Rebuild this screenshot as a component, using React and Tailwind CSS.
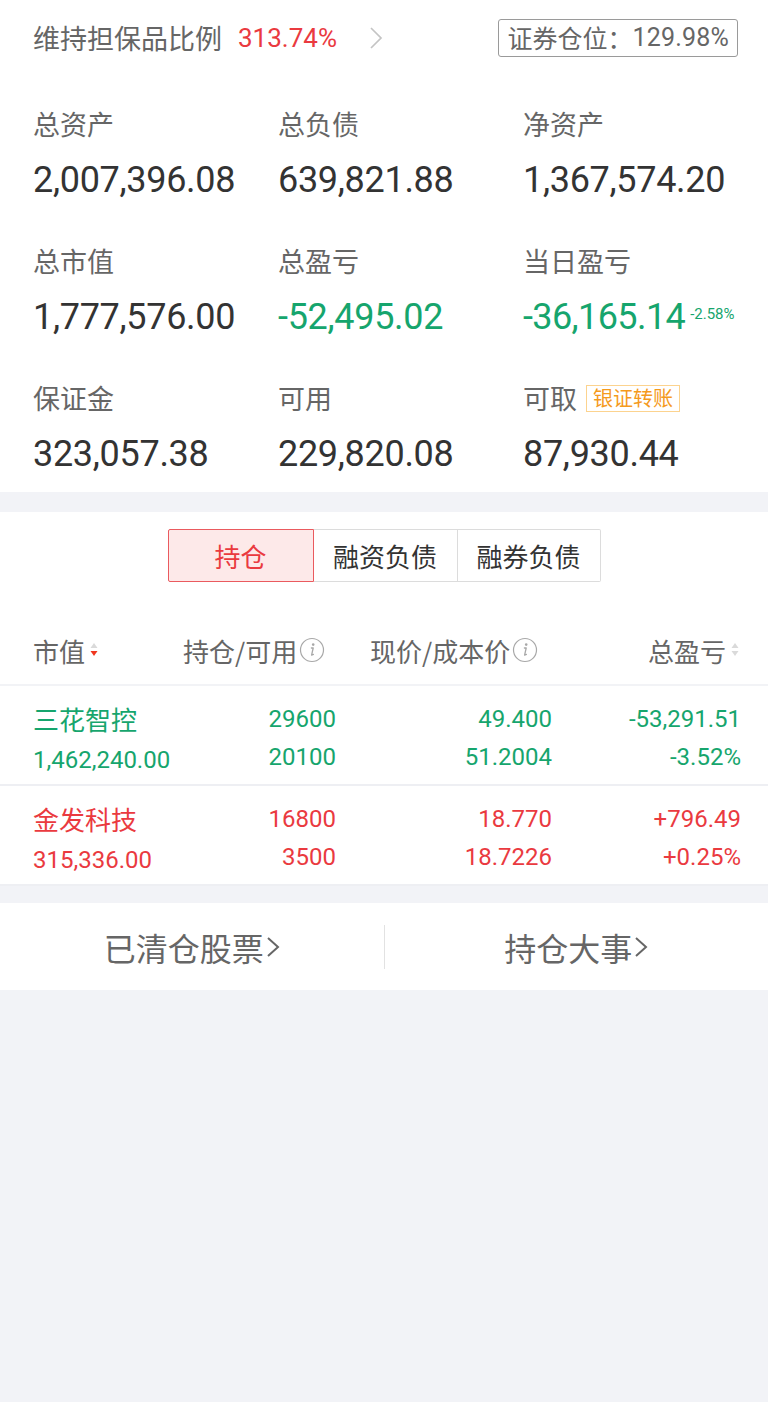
import React from "react";

const CJK = "font-['Noto_Sans_CJK_SC',sans-serif]";
const NUM = "font-['Roboto','Noto_Sans_CJK_SC',sans-serif]";

function Stat({ label, value, tone = "text-[#333]", extra }) {
  return (
    <div>
      <div className={`flex items-center h-[40px] text-[27px] text-[#666] ${CJK}`}>
        {label}
        {extra}
      </div>
      <div className={`mt-[16px] flex items-baseline text-[36px] leading-[40px] tracking-[-0.3px] ${NUM} ${tone}`}>
        {value}
      </div>
    </div>
  );
}

function SortIcon({ active }) {
  return (
    <svg width="10" height="20" viewBox="0 0 10 20" className="ml-[4px]">
      <path d="M5 3 L8.5 8 L1.5 8 Z" fill="#dadada" />
      <path d="M5 16 L8.5 11 L1.5 11 Z" fill={active ? "#f0361e" : "#dadada"} />
    </svg>
  );
}

function InfoIcon() {
  return (
    <svg width="26" height="26" viewBox="0 0 26 26" className="ml-[2px]">
      <circle cx="13" cy="13" r="11.5" fill="none" stroke="#a8a8a8" strokeWidth="1.2" />
      <circle cx="14.2" cy="7.6" r="1.3" fill="#a8a8a8" />
      <path d="M12.4 11 L14.2 11 L12.6 18.2 L14.4 17.4" fill="none" stroke="#a8a8a8" strokeWidth="1.3" strokeLinejoin="round" strokeLinecap="round" />
    </svg>
  );
}

function Chevron({ className = "", w = 14, h = 24, sw = 1.6 }) {
  return (
    <svg width={w} height={h} viewBox={`0 0 ${w} ${h}`} className={className}>
      <path
        d={`M2 2 L${w - 2} ${h / 2} L2 ${h - 2}`}
        fill="none"
        stroke="currentColor"
        strokeWidth={sw}
      />
    </svg>
  );
}

const rows = [
  {
    name: "三花智控",
    mv: "1,462,240.00",
    hold: "29600",
    avail: "20100",
    price: "49.400",
    cost: "51.2004",
    pl: "-53,291.51",
    pct: "-3.52%",
    tone: "text-[#16a56d]",
  },
  {
    name: "金发科技",
    mv: "315,336.00",
    hold: "16800",
    avail: "3500",
    price: "18.770",
    cost: "18.7226",
    pl: "+796.49",
    pct: "+0.25%",
    tone: "text-[#ea3a3f]",
  },
];

export default function App() {
  return (
    <div className={`min-h-[1402px] w-[768px] bg-[#f2f3f7] ${CJK}`}>
      {/* Summary */}
      <div className="bg-white pb-[18px]">
        <div className="flex items-center justify-between pl-[33px] pr-[30px] pt-[19px] h-[57px]">
          <div className="flex items-center text-[27px] text-[#666]">
            <span>维持担保品比例</span>
            <span className={`ml-[16px] text-[#ea3a3f] ${NUM} text-[26px]`}>313.74%</span>
            <Chevron className="ml-[32px] text-[#c4c4c4]" w={14} h={24} sw={1.7} />
          </div>
          <div className="flex items-center h-[38px] border border-[#9a9a9a] rounded-[3px] px-[8px] text-[25px] text-[#666]">
            证券仓位：<span className={`${NUM} text-[25px] tracking-[0.2px]`}>129.98%</span>
          </div>
        </div>

        <div className="grid grid-cols-3 pl-[33px] pt-[47px] gap-y-[41px]">
          <Stat label="总资产" value="2,007,396.08" />
          <Stat label="总负债" value="639,821.88" />
          <Stat label="净资产" value="1,367,574.20" />
          <Stat label="总市值" value="1,777,576.00" />
          <Stat label="总盈亏" value="-52,495.02" tone="text-[#16a56d]" />
          <Stat
            label="当日盈亏"
            value={
              <>
                <span className="tracking-[-0.6px]">-36,165.14</span>
                <span className="ml-[5px] text-[15px] tracking-normal self-start mt-[-3px]">-2.58%</span>
              </>
            }
            tone="text-[#16a56d]"
          />
          <Stat label="保证金" value="323,057.38" />
          <Stat label="可用" value="229,820.08" />
          <Stat
            label="可取"
            value="87,930.44"
            extra={
              <span className="ml-[9px] flex items-center h-[27px] px-[6px] border border-[#fcd38f] text-[20px] text-[#f59a1d]">
                银证转账
              </span>
            }
          />
        </div>
      </div>

      {/* Holdings */}
      <div className="mt-[20px] bg-white">
        <div className="flex justify-center pt-[17px]">
          <div className="flex h-[53px] text-[26px]">
            <div className="w-[146px] flex items-center justify-center bg-[#fde9e9] border border-[#ea5a5e] rounded-l-[2px] text-[#ea3a3f]">
              持仓
            </div>
            <div className="w-[144px] flex items-center justify-center border-y border-r border-[#dcdcdc] text-[#333]">
              融资负债
            </div>
            <div className="w-[143px] flex items-center justify-center border-y border-r border-[#dcdcdc] rounded-r-[2px] text-[#333]">
              融券负债
            </div>
          </div>
        </div>

        <div className="mt-[34px] h-[70px] flex items-center pr-[28px] pl-[33px] text-[26px] text-[#666] border-b-2 border-[#f2f3f6]">
          <div className="w-[150px] flex items-center">
            市值
            <SortIcon active />
          </div>
          <div className="w-[187px] flex items-center">
            持仓/可用
            <InfoIcon />
          </div>
          <div className="w-[200px] flex items-center">
            现价/成本价
            <InfoIcon />
          </div>
          <div className="flex-1 flex items-center justify-end">
            总盈亏
            <SortIcon />
          </div>
        </div>

        {rows.map((r) => (
          <div
            key={r.name}
            className={`h-[100px] flex items-center pt-[6px] pl-[33px] pr-[27px] border-b-2 border-[#eeeff3] ${r.tone}`}
          >
            <div className="w-[150px] flex flex-col">
              <div className="text-[26px] leading-[36px]">{r.name}</div>
              <div className={`mt-[8px] text-[24px] leading-[30px] ${NUM}`}>{r.mv}</div>
            </div>
            <div className={`w-[153px] flex flex-col items-end text-[24px] leading-[38px] ${NUM}`}>
              <div>{r.hold}</div>
              <div>{r.avail}</div>
            </div>
            <div className={`w-[216px] flex flex-col items-end text-[24px] leading-[38px] ${NUM}`}>
              <div>{r.price}</div>
              <div>{r.cost}</div>
            </div>
            <div className={`flex-1 flex flex-col items-end text-[24px] leading-[38px] ${NUM}`}>
              <div>{r.pl}</div>
              <div>{r.pct}</div>
            </div>
          </div>
        ))}
      </div>

      {/* Links */}
      <div className="mt-[17px] bg-white h-[87px] flex items-center text-[32px] text-[#666]">
        <div className="flex-1 flex items-center justify-center">
          已清仓股票
          <Chevron className="ml-[2px] text-[#666]" w={14} h={22} sw={2} />
        </div>
        <div className="w-px h-[44px] bg-[#e2e2e2]" />
        <div className="flex-1 flex items-center justify-center">
          持仓大事
          <Chevron className="ml-[2px] text-[#666]" w={14} h={22} sw={2} />
        </div>
      </div>
    </div>
  );
}
